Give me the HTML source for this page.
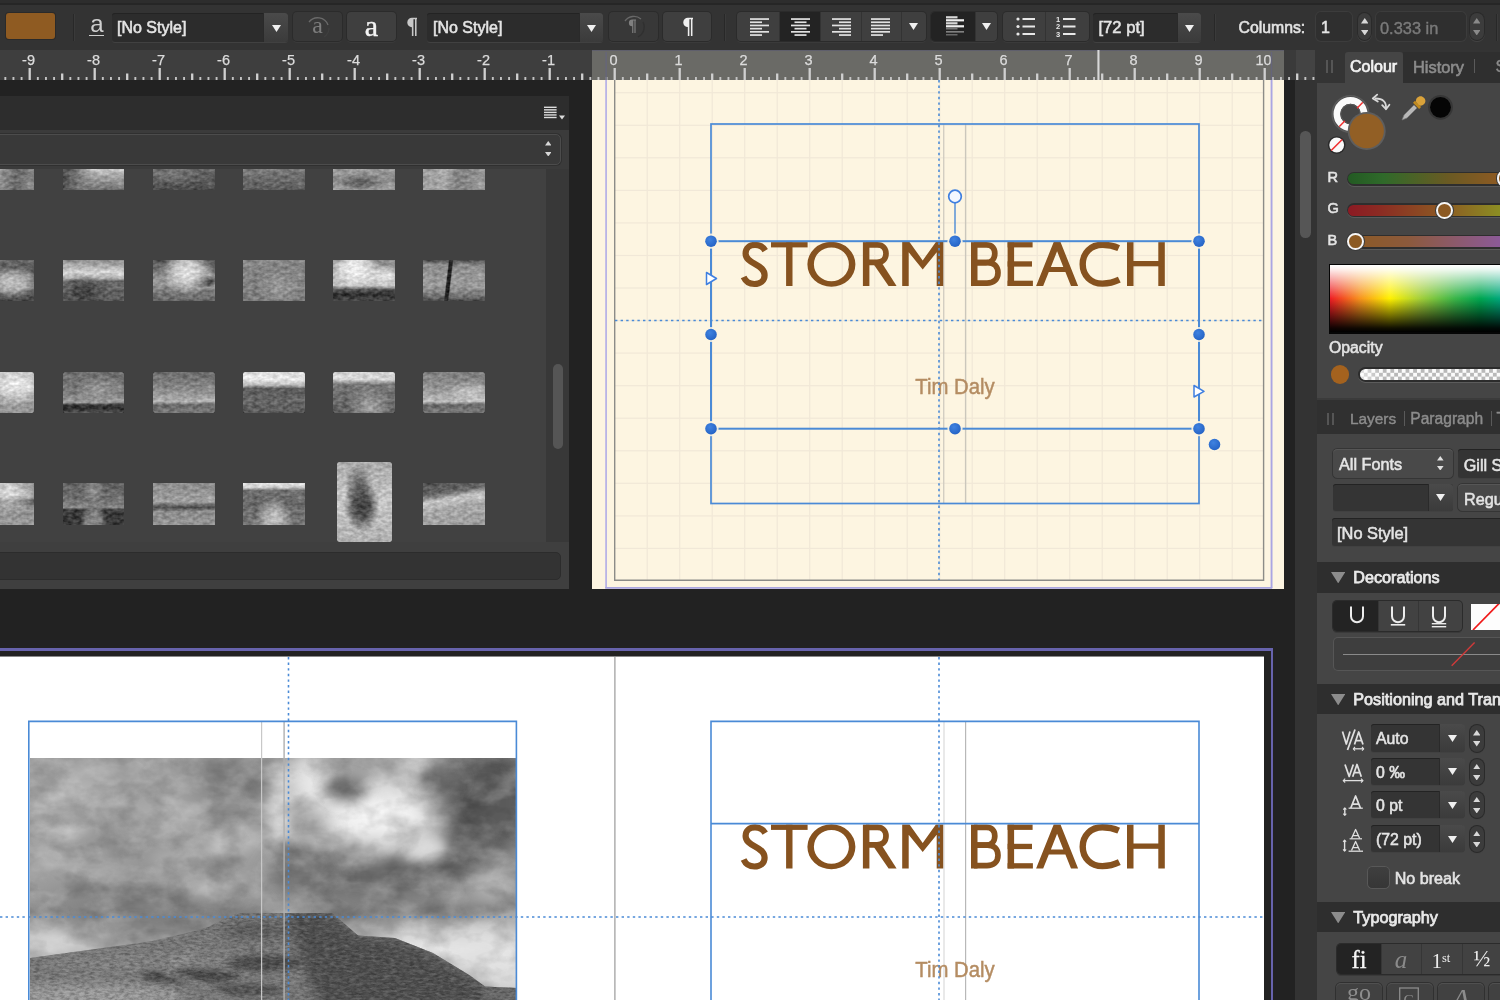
<!DOCTYPE html><html><head><meta charset="utf-8"><title>Publisher</title><style>
*{box-sizing:border-box;margin:0;padding:0}
html,body{width:1500px;height:1000px;overflow:hidden;background:#222;font-family:"Liberation Sans",sans-serif;}
.a{position:absolute}
.t{position:absolute;white-space:nowrap;font-size:16px;line-height:20px;color:#e4e4e4;-webkit-text-stroke:0.55px #e4e4e4}
.dim{color:#8c8c8c;-webkit-text-stroke:0.4px #8c8c8c}
.fld{position:absolute;background:#2c2c2c;border-radius:3px;box-shadow:inset 0 1px 0 #232323,0 1px 0 #414141}
.arr{position:absolute;background:linear-gradient(#4a4a4a,#3b3b3b);border-left:1px solid #2a2a2a;border-radius:0 3px 3px 0}
.btn{position:absolute;background:#3f3f3f;border-radius:4px;box-shadow:0 0 0 1px #2b2b2b,0 2px 0 #3a3a3a}
.grp{position:absolute;border-radius:4px;box-shadow:0 0 0 1px #2b2b2b,0 2px 0 #3a3a3a;background:#3f3f3f;overflow:hidden}
.seg{position:absolute;top:0;bottom:0;border-left:1px solid #333}
.sel{background:#232323}
.step{position:absolute;background:#3c3c3c;border-radius:7px;box-shadow:0 0 0 1px #2a2a2a,0 1px 0 1px #444}
.sep{position:absolute;width:1px;background:#282828;box-shadow:1px 0 0 #3a3a3a}
.hdr{position:absolute;left:1317px;right:0;background:#2e2e2e}
</style></head><body><div id="root" style="position:absolute;left:0;top:0;width:1500px;height:1000px;overflow:hidden;will-change:transform">
<div class="a" style="left:0;top:0;width:1500px;height:50px;background:#333"></div>
<div class="a" style="left:0;top:0;width:1500px;height:3px;background:#2d2d2d"></div>
<div class="a" style="left:0;top:3px;width:1500px;height:2px;background:#262626"></div>
<div class="a" style="left:6px;top:13px;width:49px;height:26px;background:#8f5b22;border-radius:3px;box-shadow:0 0 0 1px #2a2a2a"></div>
<div class="sep" style="left:73px;top:14px;height:27px"></div>
<div class="a" style="left:88px;top:9px;width:18px;height:30px;color:#cfcfcf;font-size:24px;line-height:30px;text-align:center">a</div>
<div class="a" style="left:89px;top:34.5px;width:15px;height:1.5px;background:#cfcfcf"></div>
<div class="fld" style="left:112px;top:13px;width:176px;height:29px"></div><div class="arr" style="left:263px;top:13px;width:25px;height:29px"></div><svg class="a" style="left:271.5px;top:24.5px" width="9" height="7" viewBox="0 0 9 7"><path d="M0 0H9L4.5 7Z" fill="#f0f0f0"/></svg>
<div class="t" style="left:117px;top:18px">[No Style]</div>
<div class="btn" style="left:293px;top:12px;width:49px;height:29px;background:#383838"></div>
<div class="btn" style="left:347px;top:12px;width:49px;height:29px"></div>
<div class="a" style="left:293px;top:10px;width:49px;height:30px;text-align:center;font-family:'Liberation Serif',serif;font-size:24px;line-height:30px;color:#7d7d7d">a</div>
<svg class="a" style="left:304px;top:14px" width="28" height="26" viewBox="0 0 28 26"><path d="M5 8A11 11 0 0 1 24 11" fill="none" stroke="#6a6a6a" stroke-width="1.3"/><path d="M25 14A11 11 0 0 1 20 23" fill="none" stroke="#3f3f3f" stroke-width="1.3"/></svg>
<div class="a" style="left:347px;top:9px;width:49px;height:34px;text-align:center;font-family:'Liberation Serif',serif;font-size:30px;line-height:34px;color:#f4f4f4;-webkit-text-stroke:0.4px #f4f4f4">a</div>
<svg class="a" style="left:405.6px;top:16.6px" width="11.76" height="19.6" viewBox="0 0 12 20"><path d="M6.2 0.8H11.6V2.2H10.8V20H9.2V2.2H7.6V20H6V10.4A4.8 4.8 0 0 1 6.2 0.8Z" fill="#c8c8c8"/></svg>
<div class="fld" style="left:427px;top:13px;width:176px;height:29px"></div><div class="arr" style="left:579px;top:13px;width:24px;height:29px"></div><svg class="a" style="left:587.0px;top:24.5px" width="9" height="7" viewBox="0 0 9 7"><path d="M0 0H9L4.5 7Z" fill="#f0f0f0"/></svg>
<div class="t" style="left:433px;top:18px">[No Style]</div>
<div class="btn" style="left:609px;top:12px;width:49px;height:29px;background:#383838"></div>
<div class="btn" style="left:663px;top:12px;width:48px;height:29px"></div>
<svg class="a" style="left:628px;top:19px" width="8.4" height="14" viewBox="0 0 12 20"><path d="M6.2 0.8H11.6V2.2H10.8V20H9.2V2.2H7.6V20H6V10.4A4.8 4.8 0 0 1 6.2 0.8Z" fill="#808080"/></svg>
<svg class="a" style="left:620px;top:14px" width="28" height="26" viewBox="0 0 28 26"><path d="M5 7A11 11 0 0 1 21 5" fill="none" stroke="#686868" stroke-width="1.3"/><path d="M23 8A11 11 0 0 1 18 23" fill="none" stroke="#303030" stroke-width="1.3"/></svg>
<svg class="a" style="left:681.5px;top:17px" width="11.639999999999999" height="19.4" viewBox="0 0 12 20"><path d="M6.2 0.8H11.6V2.2H10.8V20H9.2V2.2H7.6V20H6V10.4A4.8 4.8 0 0 1 6.2 0.8Z" fill="#f0f0f0"/></svg>
<div class="sep" style="left:724px;top:14px;height:27px"></div>
<div class="grp" style="left:737px;top:12px;width:189px;height:29px"><div class="seg sel" style="left:42px;width:41px"></div><div class="seg" style="left:83px;width:41px"></div><div class="seg" style="left:124px;width:40px"></div><div class="seg" style="left:164px;width:25px"></div></div>
<svg class="a" style="left:750px;top:17.5px" width="19" height="18" viewBox="0 0 19 18"><rect x="0" y="0.2" width="19" height="1.7" fill="#e2e2e2"/><rect x="0" y="3.4000000000000004" width="12" height="1.7" fill="#e2e2e2"/><rect x="0" y="6.6000000000000005" width="19" height="1.7" fill="#e2e2e2"/><rect x="0" y="9.8" width="12" height="1.7" fill="#e2e2e2"/><rect x="0" y="13.0" width="19" height="1.7" fill="#e2e2e2"/><rect x="0" y="16.2" width="12" height="1.7" fill="#e2e2e2"/></svg>
<svg class="a" style="left:790.5px;top:17.5px" width="19" height="18" viewBox="0 0 19 18"><rect x="0" y="0.2" width="19" height="1.7" fill="#e2e2e2"/><rect x="3.5" y="3.4000000000000004" width="12" height="1.7" fill="#e2e2e2"/><rect x="0" y="6.6000000000000005" width="19" height="1.7" fill="#e2e2e2"/><rect x="3.5" y="9.8" width="12" height="1.7" fill="#e2e2e2"/><rect x="0" y="13.0" width="19" height="1.7" fill="#e2e2e2"/><rect x="3.5" y="16.2" width="12" height="1.7" fill="#e2e2e2"/></svg>
<svg class="a" style="left:831.5px;top:17.5px" width="19" height="18" viewBox="0 0 19 18"><rect x="0" y="0.2" width="19" height="1.7" fill="#e2e2e2"/><rect x="7" y="3.4000000000000004" width="12" height="1.7" fill="#e2e2e2"/><rect x="0" y="6.6000000000000005" width="19" height="1.7" fill="#e2e2e2"/><rect x="7" y="9.8" width="12" height="1.7" fill="#e2e2e2"/><rect x="0" y="13.0" width="19" height="1.7" fill="#e2e2e2"/><rect x="7" y="16.2" width="12" height="1.7" fill="#e2e2e2"/></svg>
<svg class="a" style="left:870.5px;top:17.5px" width="19" height="18" viewBox="0 0 19 18"><rect x="0" y="0.2" width="19" height="1.7" fill="#e2e2e2"/><rect x="0" y="3.4000000000000004" width="19" height="1.7" fill="#e2e2e2"/><rect x="0" y="6.6000000000000005" width="19" height="1.7" fill="#e2e2e2"/><rect x="0" y="9.8" width="19" height="1.7" fill="#e2e2e2"/><rect x="0" y="13.0" width="19" height="1.7" fill="#e2e2e2"/><rect x="0" y="16.2" width="12" height="1.7" fill="#e2e2e2"/></svg>
<svg class="a" style="left:909.0px;top:23.0px" width="9" height="7" viewBox="0 0 9 7"><path d="M0 0H9L4.5 7Z" fill="#f0f0f0"/></svg>
<div class="grp" style="left:931px;top:12px;width:66px;height:29px"><div class="seg sel" style="left:0;width:44px;border:0"></div><div class="seg" style="left:44px;width:22px"></div></div>
<svg class="a" style="left:946px;top:16px" width="19" height="21" viewBox="0 0 19 21"><rect x="0" y="0.2" width="11.5" height="2.2" fill="#d8d8d8"/><rect x="0" y="3.2" width="18" height="2.2" fill="#f0f0f0"/><rect x="0" y="6.2" width="11.5" height="2.2" fill="#d8d8d8"/><rect x="0" y="9.2" width="18" height="2.2" fill="#f0f0f0"/><rect x="0" y="12.2" width="11.5" height="1.2" fill="#8a8a8a"/><rect x="0" y="15.2" width="18" height="1.3" fill="#9a9a9a"/><rect x="0" y="18.2" width="11.5" height="1.2" fill="#7a7a7a"/></svg>
<svg class="a" style="left:982.0px;top:23.0px" width="9" height="7" viewBox="0 0 9 7"><path d="M0 0H9L4.5 7Z" fill="#f0f0f0"/></svg>
<div class="grp" style="left:1003px;top:12px;width:86px;height:29px"><div class="seg" style="left:42px;width:44px"></div></div>
<svg class="a" style="left:1016px;top:16px" width="20" height="21" viewBox="0 0 20 21"><circle cx="2" cy="3.0" r="1.6" fill="#e8e8e8"/><rect x="6.5" y="2.0" width="12.5" height="2" fill="#e8e8e8"/><circle cx="2" cy="10.5" r="1.6" fill="#e8e8e8"/><rect x="6.5" y="9.5" width="12.5" height="2" fill="#e8e8e8"/><circle cx="2" cy="18.0" r="1.6" fill="#e8e8e8"/><rect x="6.5" y="17.0" width="12.5" height="2" fill="#e8e8e8"/></svg>
<svg class="a" style="left:1056px;top:15px" width="22" height="23" viewBox="0 0 22 23"><text x="0" y="6.8" font-family="Liberation Sans" font-size="7.5" font-weight="bold" fill="#e8e8e8">1</text><rect x="7" y="3.0" width="12.5" height="2" fill="#e8e8e8"/><text x="0" y="14.3" font-family="Liberation Sans" font-size="7.5" font-weight="bold" fill="#e8e8e8">2</text><rect x="7" y="10.5" width="12.5" height="2" fill="#e8e8e8"/><text x="0" y="21.8" font-family="Liberation Sans" font-size="7.5" font-weight="bold" fill="#e8e8e8">3</text><rect x="7" y="18.0" width="12.5" height="2" fill="#e8e8e8"/></svg>
<div class="fld" style="left:1093px;top:13px;width:108px;height:29px"></div><div class="arr" style="left:1177px;top:13px;width:24px;height:29px"></div><svg class="a" style="left:1185.0px;top:24.5px" width="9" height="7" viewBox="0 0 9 7"><path d="M0 0H9L4.5 7Z" fill="#f0f0f0"/></svg>
<div class="t" style="left:1098.5px;top:18px;font-size:16.6px">[72 pt]</div>
<div class="sep" style="left:1214px;top:14px;height:27px"></div>
<div class="t" style="left:1238.5px;top:17.5px;font-size:15.8px">Columns:</div>
<div class="fld" style="left:1316px;top:12px;width:36px;height:29px;border-radius:5px;background:#2f2f2f;box-shadow:0 0 0 1px #3c3c3c"></div>
<div class="t" style="left:1321px;top:17.5px">1</div>
<div class="step" style="left:1357.5px;top:12.5px;width:13.5px;height:27.5px"></div><svg class="a" style="left:1360.5px;top:18.0px" width="7.5" height="5.5" viewBox="0 0 7.5 5.5"><path d="M0 5.5H7.5L3.75 0Z" fill="#d8d8d8"/></svg><svg class="a" style="left:1360.5px;top:29.549999999999997px" width="7.5" height="5.5" viewBox="0 0 7.5 5.5"><path d="M0 0H7.5L3.75 5.5Z" fill="#d8d8d8"/></svg>
<div class="fld" style="left:1376px;top:12px;width:89.5px;height:29px;border-radius:5px;background:#2f2f2f;box-shadow:0 0 0 1px #3c3c3c"></div>
<div class="t dim" style="left:1380px;top:17.5px;font-size:16.4px;color:#7a7a7a;-webkit-text-stroke-color:#7a7a7a">0.333 in</div>
<div class="step" style="left:1469.5px;top:12.5px;width:14px;height:27.5px"></div><svg class="a" style="left:1472.75px;top:18.0px" width="7.5" height="5.5" viewBox="0 0 7.5 5.5"><path d="M0 5.5H7.5L3.75 0Z" fill="#8a8a8a"/></svg><svg class="a" style="left:1472.75px;top:29.549999999999997px" width="7.5" height="5.5" viewBox="0 0 7.5 5.5"><path d="M0 0H7.5L3.75 5.5Z" fill="#8a8a8a"/></svg>
<div class="sep" style="left:1496px;top:14px;height:27px"></div>
<div class="a" style="left:0;top:50px;width:1315px;height:30px;background:#3e3e3e"></div>
<div class="a" style="left:592px;top:50px;width:692px;height:30px;background:#6a6a66;border-top:1.5px solid #5f5f6c"></div>
<div class="a" style="left:1284px;top:50px;width:12px;height:30px;background:#3a3a3a"></div>
<div class="a" style="left:1296px;top:50px;width:19px;height:30px;background:#434343"></div>
<svg class="a" style="left:0;top:50px" width="1316" height="30" viewBox="0 0 1316 30"><rect x="4.38" y="27" width="1.9" height="3" fill="#c4c4c4"/><rect x="12.50" y="27" width="1.9" height="3" fill="#c4c4c4"/><rect x="20.63" y="27" width="1.9" height="3" fill="#c4c4c4"/><rect x="28.55" y="18" width="2.3" height="12" fill="#d0d0d0"/><rect x="36.88" y="27" width="1.9" height="3" fill="#c4c4c4"/><rect x="45.00" y="27" width="1.9" height="3" fill="#c4c4c4"/><rect x="53.13" y="27" width="1.9" height="3" fill="#c4c4c4"/><rect x="61.05" y="23.5" width="2.3" height="6.5" fill="#d0d0d0"/><rect x="69.38" y="27" width="1.9" height="3" fill="#c4c4c4"/><rect x="77.50" y="27" width="1.9" height="3" fill="#c4c4c4"/><rect x="85.63" y="27" width="1.9" height="3" fill="#c4c4c4"/><rect x="93.55" y="18" width="2.3" height="12" fill="#d0d0d0"/><rect x="101.88" y="27" width="1.9" height="3" fill="#c4c4c4"/><rect x="110.00" y="27" width="1.9" height="3" fill="#c4c4c4"/><rect x="118.13" y="27" width="1.9" height="3" fill="#c4c4c4"/><rect x="126.05" y="23.5" width="2.3" height="6.5" fill="#d0d0d0"/><rect x="134.38" y="27" width="1.9" height="3" fill="#c4c4c4"/><rect x="142.50" y="27" width="1.9" height="3" fill="#c4c4c4"/><rect x="150.63" y="27" width="1.9" height="3" fill="#c4c4c4"/><rect x="158.55" y="18" width="2.3" height="12" fill="#d0d0d0"/><rect x="166.88" y="27" width="1.9" height="3" fill="#c4c4c4"/><rect x="175.00" y="27" width="1.9" height="3" fill="#c4c4c4"/><rect x="183.13" y="27" width="1.9" height="3" fill="#c4c4c4"/><rect x="191.05" y="23.5" width="2.3" height="6.5" fill="#d0d0d0"/><rect x="199.38" y="27" width="1.9" height="3" fill="#c4c4c4"/><rect x="207.50" y="27" width="1.9" height="3" fill="#c4c4c4"/><rect x="215.63" y="27" width="1.9" height="3" fill="#c4c4c4"/><rect x="223.55" y="18" width="2.3" height="12" fill="#d0d0d0"/><rect x="231.88" y="27" width="1.9" height="3" fill="#c4c4c4"/><rect x="240.00" y="27" width="1.9" height="3" fill="#c4c4c4"/><rect x="248.13" y="27" width="1.9" height="3" fill="#c4c4c4"/><rect x="256.05" y="23.5" width="2.3" height="6.5" fill="#d0d0d0"/><rect x="264.38" y="27" width="1.9" height="3" fill="#c4c4c4"/><rect x="272.50" y="27" width="1.9" height="3" fill="#c4c4c4"/><rect x="280.63" y="27" width="1.9" height="3" fill="#c4c4c4"/><rect x="288.55" y="18" width="2.3" height="12" fill="#d0d0d0"/><rect x="296.88" y="27" width="1.9" height="3" fill="#c4c4c4"/><rect x="305.00" y="27" width="1.9" height="3" fill="#c4c4c4"/><rect x="313.13" y="27" width="1.9" height="3" fill="#c4c4c4"/><rect x="321.05" y="23.5" width="2.3" height="6.5" fill="#d0d0d0"/><rect x="329.38" y="27" width="1.9" height="3" fill="#c4c4c4"/><rect x="337.50" y="27" width="1.9" height="3" fill="#c4c4c4"/><rect x="345.63" y="27" width="1.9" height="3" fill="#c4c4c4"/><rect x="353.55" y="18" width="2.3" height="12" fill="#d0d0d0"/><rect x="361.88" y="27" width="1.9" height="3" fill="#c4c4c4"/><rect x="370.00" y="27" width="1.9" height="3" fill="#c4c4c4"/><rect x="378.13" y="27" width="1.9" height="3" fill="#c4c4c4"/><rect x="386.05" y="23.5" width="2.3" height="6.5" fill="#d0d0d0"/><rect x="394.38" y="27" width="1.9" height="3" fill="#c4c4c4"/><rect x="402.50" y="27" width="1.9" height="3" fill="#c4c4c4"/><rect x="410.63" y="27" width="1.9" height="3" fill="#c4c4c4"/><rect x="418.55" y="18" width="2.3" height="12" fill="#d0d0d0"/><rect x="426.88" y="27" width="1.9" height="3" fill="#c4c4c4"/><rect x="435.00" y="27" width="1.9" height="3" fill="#c4c4c4"/><rect x="443.13" y="27" width="1.9" height="3" fill="#c4c4c4"/><rect x="451.05" y="23.5" width="2.3" height="6.5" fill="#d0d0d0"/><rect x="459.38" y="27" width="1.9" height="3" fill="#c4c4c4"/><rect x="467.50" y="27" width="1.9" height="3" fill="#c4c4c4"/><rect x="475.63" y="27" width="1.9" height="3" fill="#c4c4c4"/><rect x="483.55" y="18" width="2.3" height="12" fill="#d0d0d0"/><rect x="491.88" y="27" width="1.9" height="3" fill="#c4c4c4"/><rect x="500.00" y="27" width="1.9" height="3" fill="#c4c4c4"/><rect x="508.13" y="27" width="1.9" height="3" fill="#c4c4c4"/><rect x="516.05" y="23.5" width="2.3" height="6.5" fill="#d0d0d0"/><rect x="524.38" y="27" width="1.9" height="3" fill="#c4c4c4"/><rect x="532.50" y="27" width="1.9" height="3" fill="#c4c4c4"/><rect x="540.62" y="27" width="1.9" height="3" fill="#c4c4c4"/><rect x="548.55" y="18" width="2.3" height="12" fill="#d0d0d0"/><rect x="556.88" y="27" width="1.9" height="3" fill="#c4c4c4"/><rect x="565.00" y="27" width="1.9" height="3" fill="#c4c4c4"/><rect x="573.12" y="27" width="1.9" height="3" fill="#c4c4c4"/><rect x="581.05" y="23.5" width="2.3" height="6.5" fill="#d0d0d0"/><rect x="589.38" y="27" width="1.9" height="3" fill="#c4c4c4"/><rect x="597.50" y="27" width="1.9" height="3" fill="#c4c4c4"/><rect x="605.62" y="27" width="1.9" height="3" fill="#c4c4c4"/><rect x="613.55" y="18" width="2.3" height="12" fill="#d0d0d0"/><rect x="621.88" y="27" width="1.9" height="3" fill="#c4c4c4"/><rect x="630.00" y="27" width="1.9" height="3" fill="#c4c4c4"/><rect x="638.12" y="27" width="1.9" height="3" fill="#c4c4c4"/><rect x="646.05" y="23.5" width="2.3" height="6.5" fill="#d0d0d0"/><rect x="654.38" y="27" width="1.9" height="3" fill="#c4c4c4"/><rect x="662.50" y="27" width="1.9" height="3" fill="#c4c4c4"/><rect x="670.62" y="27" width="1.9" height="3" fill="#c4c4c4"/><rect x="678.55" y="18" width="2.3" height="12" fill="#d0d0d0"/><rect x="686.88" y="27" width="1.9" height="3" fill="#c4c4c4"/><rect x="695.00" y="27" width="1.9" height="3" fill="#c4c4c4"/><rect x="703.12" y="27" width="1.9" height="3" fill="#c4c4c4"/><rect x="711.05" y="23.5" width="2.3" height="6.5" fill="#d0d0d0"/><rect x="719.38" y="27" width="1.9" height="3" fill="#c4c4c4"/><rect x="727.50" y="27" width="1.9" height="3" fill="#c4c4c4"/><rect x="735.62" y="27" width="1.9" height="3" fill="#c4c4c4"/><rect x="743.55" y="18" width="2.3" height="12" fill="#d0d0d0"/><rect x="751.88" y="27" width="1.9" height="3" fill="#c4c4c4"/><rect x="760.00" y="27" width="1.9" height="3" fill="#c4c4c4"/><rect x="768.12" y="27" width="1.9" height="3" fill="#c4c4c4"/><rect x="776.05" y="23.5" width="2.3" height="6.5" fill="#d0d0d0"/><rect x="784.38" y="27" width="1.9" height="3" fill="#c4c4c4"/><rect x="792.50" y="27" width="1.9" height="3" fill="#c4c4c4"/><rect x="800.62" y="27" width="1.9" height="3" fill="#c4c4c4"/><rect x="808.55" y="18" width="2.3" height="12" fill="#d0d0d0"/><rect x="816.88" y="27" width="1.9" height="3" fill="#c4c4c4"/><rect x="825.00" y="27" width="1.9" height="3" fill="#c4c4c4"/><rect x="833.12" y="27" width="1.9" height="3" fill="#c4c4c4"/><rect x="841.05" y="23.5" width="2.3" height="6.5" fill="#d0d0d0"/><rect x="849.38" y="27" width="1.9" height="3" fill="#c4c4c4"/><rect x="857.50" y="27" width="1.9" height="3" fill="#c4c4c4"/><rect x="865.62" y="27" width="1.9" height="3" fill="#c4c4c4"/><rect x="873.55" y="18" width="2.3" height="12" fill="#d0d0d0"/><rect x="881.88" y="27" width="1.9" height="3" fill="#c4c4c4"/><rect x="890.00" y="27" width="1.9" height="3" fill="#c4c4c4"/><rect x="898.12" y="27" width="1.9" height="3" fill="#c4c4c4"/><rect x="906.05" y="23.5" width="2.3" height="6.5" fill="#d0d0d0"/><rect x="914.38" y="27" width="1.9" height="3" fill="#c4c4c4"/><rect x="922.50" y="27" width="1.9" height="3" fill="#c4c4c4"/><rect x="930.62" y="27" width="1.9" height="3" fill="#c4c4c4"/><rect x="938.55" y="18" width="2.3" height="12" fill="#d0d0d0"/><rect x="946.88" y="27" width="1.9" height="3" fill="#c4c4c4"/><rect x="955.00" y="27" width="1.9" height="3" fill="#c4c4c4"/><rect x="963.12" y="27" width="1.9" height="3" fill="#c4c4c4"/><rect x="971.05" y="23.5" width="2.3" height="6.5" fill="#d0d0d0"/><rect x="979.38" y="27" width="1.9" height="3" fill="#c4c4c4"/><rect x="987.50" y="27" width="1.9" height="3" fill="#c4c4c4"/><rect x="995.62" y="27" width="1.9" height="3" fill="#c4c4c4"/><rect x="1003.55" y="18" width="2.3" height="12" fill="#d0d0d0"/><rect x="1011.88" y="27" width="1.9" height="3" fill="#c4c4c4"/><rect x="1020.00" y="27" width="1.9" height="3" fill="#c4c4c4"/><rect x="1028.12" y="27" width="1.9" height="3" fill="#c4c4c4"/><rect x="1036.05" y="23.5" width="2.3" height="6.5" fill="#d0d0d0"/><rect x="1044.38" y="27" width="1.9" height="3" fill="#c4c4c4"/><rect x="1052.50" y="27" width="1.9" height="3" fill="#c4c4c4"/><rect x="1060.62" y="27" width="1.9" height="3" fill="#c4c4c4"/><rect x="1068.55" y="18" width="2.3" height="12" fill="#d0d0d0"/><rect x="1076.88" y="27" width="1.9" height="3" fill="#c4c4c4"/><rect x="1085.00" y="27" width="1.9" height="3" fill="#c4c4c4"/><rect x="1093.12" y="27" width="1.9" height="3" fill="#c4c4c4"/><rect x="1101.05" y="23.5" width="2.3" height="6.5" fill="#d0d0d0"/><rect x="1109.38" y="27" width="1.9" height="3" fill="#c4c4c4"/><rect x="1117.50" y="27" width="1.9" height="3" fill="#c4c4c4"/><rect x="1125.62" y="27" width="1.9" height="3" fill="#c4c4c4"/><rect x="1133.55" y="18" width="2.3" height="12" fill="#d0d0d0"/><rect x="1141.88" y="27" width="1.9" height="3" fill="#c4c4c4"/><rect x="1150.00" y="27" width="1.9" height="3" fill="#c4c4c4"/><rect x="1158.12" y="27" width="1.9" height="3" fill="#c4c4c4"/><rect x="1166.05" y="23.5" width="2.3" height="6.5" fill="#d0d0d0"/><rect x="1174.38" y="27" width="1.9" height="3" fill="#c4c4c4"/><rect x="1182.50" y="27" width="1.9" height="3" fill="#c4c4c4"/><rect x="1190.62" y="27" width="1.9" height="3" fill="#c4c4c4"/><rect x="1198.55" y="18" width="2.3" height="12" fill="#d0d0d0"/><rect x="1206.88" y="27" width="1.9" height="3" fill="#c4c4c4"/><rect x="1215.00" y="27" width="1.9" height="3" fill="#c4c4c4"/><rect x="1223.12" y="27" width="1.9" height="3" fill="#c4c4c4"/><rect x="1231.05" y="23.5" width="2.3" height="6.5" fill="#d0d0d0"/><rect x="1239.38" y="27" width="1.9" height="3" fill="#c4c4c4"/><rect x="1247.50" y="27" width="1.9" height="3" fill="#c4c4c4"/><rect x="1255.62" y="27" width="1.9" height="3" fill="#c4c4c4"/><rect x="1263.55" y="18" width="2.3" height="12" fill="#d0d0d0"/><rect x="1271.88" y="27" width="1.9" height="3" fill="#c4c4c4"/><rect x="1280.00" y="27" width="1.9" height="3" fill="#c4c4c4"/><rect x="1288.12" y="27" width="1.9" height="3" fill="#c4c4c4"/><rect x="1296.05" y="23.5" width="2.3" height="6.5" fill="#d0d0d0"/><rect x="1304.38" y="27" width="1.9" height="3" fill="#c4c4c4"/><rect x="1312.50" y="27" width="1.9" height="3" fill="#c4c4c4"/><text x="28.5" y="15.2" text-anchor="middle" font-family="Liberation Sans" font-size="14.5" fill="#dcdcdc" stroke="#dcdcdc" stroke-width="0.25">-9</text><text x="93.5" y="15.2" text-anchor="middle" font-family="Liberation Sans" font-size="14.5" fill="#dcdcdc" stroke="#dcdcdc" stroke-width="0.25">-8</text><text x="158.5" y="15.2" text-anchor="middle" font-family="Liberation Sans" font-size="14.5" fill="#dcdcdc" stroke="#dcdcdc" stroke-width="0.25">-7</text><text x="223.5" y="15.2" text-anchor="middle" font-family="Liberation Sans" font-size="14.5" fill="#dcdcdc" stroke="#dcdcdc" stroke-width="0.25">-6</text><text x="288.5" y="15.2" text-anchor="middle" font-family="Liberation Sans" font-size="14.5" fill="#dcdcdc" stroke="#dcdcdc" stroke-width="0.25">-5</text><text x="353.5" y="15.2" text-anchor="middle" font-family="Liberation Sans" font-size="14.5" fill="#dcdcdc" stroke="#dcdcdc" stroke-width="0.25">-4</text><text x="418.5" y="15.2" text-anchor="middle" font-family="Liberation Sans" font-size="14.5" fill="#dcdcdc" stroke="#dcdcdc" stroke-width="0.25">-3</text><text x="483.5" y="15.2" text-anchor="middle" font-family="Liberation Sans" font-size="14.5" fill="#dcdcdc" stroke="#dcdcdc" stroke-width="0.25">-2</text><text x="548.5" y="15.2" text-anchor="middle" font-family="Liberation Sans" font-size="14.5" fill="#dcdcdc" stroke="#dcdcdc" stroke-width="0.25">-1</text><text x="613.5" y="15.2" text-anchor="middle" font-family="Liberation Sans" font-size="14.5" fill="#dcdcdc" stroke="#dcdcdc" stroke-width="0.25">0</text><text x="678.5" y="15.2" text-anchor="middle" font-family="Liberation Sans" font-size="14.5" fill="#dcdcdc" stroke="#dcdcdc" stroke-width="0.25">1</text><text x="743.5" y="15.2" text-anchor="middle" font-family="Liberation Sans" font-size="14.5" fill="#dcdcdc" stroke="#dcdcdc" stroke-width="0.25">2</text><text x="808.5" y="15.2" text-anchor="middle" font-family="Liberation Sans" font-size="14.5" fill="#dcdcdc" stroke="#dcdcdc" stroke-width="0.25">3</text><text x="873.5" y="15.2" text-anchor="middle" font-family="Liberation Sans" font-size="14.5" fill="#dcdcdc" stroke="#dcdcdc" stroke-width="0.25">4</text><text x="938.5" y="15.2" text-anchor="middle" font-family="Liberation Sans" font-size="14.5" fill="#dcdcdc" stroke="#dcdcdc" stroke-width="0.25">5</text><text x="1003.5" y="15.2" text-anchor="middle" font-family="Liberation Sans" font-size="14.5" fill="#dcdcdc" stroke="#dcdcdc" stroke-width="0.25">6</text><text x="1068.5" y="15.2" text-anchor="middle" font-family="Liberation Sans" font-size="14.5" fill="#dcdcdc" stroke="#dcdcdc" stroke-width="0.25">7</text><text x="1133.5" y="15.2" text-anchor="middle" font-family="Liberation Sans" font-size="14.5" fill="#dcdcdc" stroke="#dcdcdc" stroke-width="0.25">8</text><text x="1198.5" y="15.2" text-anchor="middle" font-family="Liberation Sans" font-size="14.5" fill="#dcdcdc" stroke="#dcdcdc" stroke-width="0.25">9</text><text x="1263.5" y="15.2" text-anchor="middle" font-family="Liberation Sans" font-size="14.5" fill="#dcdcdc" stroke="#dcdcdc" stroke-width="0.25">10</text><rect x="1097.4" y="0" width="2.1" height="30" fill="#d8d8d8"/><rect x="1270.8" y="2" width="1.4" height="28" fill="#65657a"/><rect x="605.4" y="2" width="1.4" height="28" fill="#65657a"/></svg>
<div class="a" style="left:0;top:96px;width:569px;height:493px;background:#404040"></div>
<div class="a" style="left:0;top:96px;width:569px;height:34px;background:#2d2d2d"></div>
<div class="a" style="left:0;top:130px;width:569px;height:39px;background:#3b3b3b"></div>
<svg class="a" style="left:544px;top:106px" width="22" height="15" viewBox="0 0 22 15"><rect x="0" y="0.6" width="12.6" height="1.4" fill="#dcdcdc"/><rect x="0" y="3.15" width="12.6" height="1.4" fill="#dcdcdc"/><rect x="0" y="5.699999999999999" width="12.6" height="1.4" fill="#dcdcdc"/><rect x="0" y="8.25" width="12.6" height="1.4" fill="#dcdcdc"/><rect x="0" y="10.799999999999999" width="12.6" height="1.4" fill="#dcdcdc"/><path d="M15 9.5H21L18 13.6Z" fill="#dcdcdc"/></svg>
<div class="a" style="left:-10px;top:134px;width:570.5px;height:31px;background:#393939;border:1px solid #4c4c4c;border-radius:5px;box-shadow:0 0 0 1px #303030"></div>
<svg class="a" style="left:544.75px;top:141.25px" width="6.5" height="4.5" viewBox="0 0 6.5 4.5"><path d="M0 4.5H6.5L3.25 0Z" fill="#d8d8d8"/></svg><svg class="a" style="left:544.75px;top:151.75px" width="6.5" height="4.5" viewBox="0 0 6.5 4.5"><path d="M0 0H6.5L3.25 4.5Z" fill="#d8d8d8"/></svg>
<div class="a" style="left:0;top:169px;width:546px;height:373px;background:#414141"></div>
<div class="a" style="left:546px;top:169px;width:23px;height:373px;background:#383838"></div>
<div class="a" style="left:553px;top:364px;width:10px;height:85px;background:#555;border-radius:5px"></div>
<div class="a" style="left:0;top:542px;width:569px;height:47px;background:#3f3f3f"></div>
<div class="a" style="left:-10px;top:552px;width:570.5px;height:28px;background:#333;border:1px solid #2c2c2c;border-radius:5px"></div>
<svg width="0" height="0" style="position:absolute"><defs><filter id="tn" x="0" y="0" width="100%" height="100%" color-interpolation-filters="sRGB"><feTurbulence type="fractalNoise" baseFrequency="0.2 0.3" numOctaves="2" seed="11" result="n"/><feColorMatrix in="n" type="matrix" values="1 0 0 0 0  1 0 0 0 0  1 0 0 0 0  0 0 0 0 1" result="g"/><feComposite in="g" in2="SourceGraphic" operator="in" result="gc"/><feComposite in="SourceGraphic" in2="gc" operator="arithmetic" k1="0" k2="1" k3="0.32" k4="-0.16"/></filter></defs></svg>
<div class="a" style="left:-27.6px;top:169px;width:61.8px;height:20.5px;background:linear-gradient(100deg,#777 0%,#9a9a9a 40%,#6a6a6a 70%,#8a8a8a 100%);filter:url(#tn);"></div>
<div class="a" style="left:62.6px;top:169px;width:61.8px;height:20.5px;background:linear-gradient(90deg,#4a4a4a 0%,#7a7a7a 25%,rgba(0,0,0,0) 50%),linear-gradient(180deg,#c8c8c8 0%,#9c9c9c 45%,#707070 100%);filter:url(#tn);"></div>
<div class="a" style="left:153px;top:169px;width:61.8px;height:20.5px;background:radial-gradient(ellipse at 30% 30%,#777 0%,rgba(0,0,0,0) 50%),linear-gradient(180deg,#686868,#4c4c4c);filter:url(#tn);"></div>
<div class="a" style="left:243px;top:169px;width:61.8px;height:20.5px;background:linear-gradient(180deg,#7a7a7a 0%,#6a6a6a 50%,#5c5c5c 100%);filter:url(#tn);"></div>
<div class="a" style="left:333px;top:169px;width:61.8px;height:20.5px;background:radial-gradient(ellipse at 45% 65%,#555 0%,rgba(0,0,0,0) 45%),linear-gradient(180deg,#9a9a9a 0%,#888 60%,#a0a0a0 100%);filter:url(#tn);"></div>
<div class="a" style="left:423.4px;top:169px;width:61.8px;height:20.5px;background:linear-gradient(100deg,#999 0%,#aaa 35%,#808080 55%,#9a9a9a 100%);filter:url(#tn);"></div>
<div class="a" style="left:-27.6px;top:260px;width:61.8px;height:41px;background:radial-gradient(ellipse at 65% 55%,#c8c8c8 0%,#aaa 25%,rgba(0,0,0,0) 50%),linear-gradient(180deg,#666,#4a4a4a);filter:url(#tn);"></div>
<div class="a" style="left:62.6px;top:260px;width:61.8px;height:41px;background:radial-gradient(ellipse at 35% 80%,#3c3c3c 0%,rgba(0,0,0,0) 40%),linear-gradient(180deg,#8a8a8a 0%,#d4d4d4 30%,#b0b0b0 44%,#6a6a6a 52%,#5a5a5a 100%);filter:url(#tn);"></div>
<div class="a" style="left:153px;top:260px;width:61.8px;height:41px;background:radial-gradient(ellipse at 55% 30%,#e4e4e4 0%,#c8c8c8 25%,rgba(0,0,0,0) 55%),radial-gradient(ellipse at 80% 52%,#444 0%,#444 12%,rgba(0,0,0,0) 22%),linear-gradient(180deg,#505050 0%,#8a8a8a 40%,#9a9a9a 55%,#7c7c7c 75%,#666 100%);filter:url(#tn);"></div>
<div class="a" style="left:243px;top:260px;width:61.8px;height:41px;background:radial-gradient(ellipse at 60% 65%,#9c9c9c 0%,rgba(0,0,0,0) 45%),linear-gradient(180deg,#868686,#7c7c7c);filter:url(#tn);"></div>
<div class="a" style="left:333px;top:260px;width:61.8px;height:41px;background:radial-gradient(ellipse at 35% 25%,#f2f2f2 0%,#ddd 22%,rgba(0,0,0,0) 45%),radial-gradient(ellipse at 80% 40%,#e8e8e8 0%,rgba(0,0,0,0) 35%),linear-gradient(180deg,#8a8a8a 0%,#a8a8a8 40%,#c0c0c0 62%,#555 72%,#2e2e2e 85%,#4a4a4a 100%);filter:url(#tn);"></div>
<div class="a" style="left:423.4px;top:260px;width:61.8px;height:41px;background:linear-gradient(97deg,rgba(0,0,0,0) 38%,#222 40%,#222 44%,rgba(0,0,0,0) 46%),linear-gradient(180deg,#4a4a4a 0%,#8c8c8c 12%,#9c9c9c 60%,#7a7a7a 85%,#4a4a4a 100%);filter:url(#tn);"></div>
<div class="a" style="left:-27.6px;top:371.5px;width:61.8px;height:41.5px;background:radial-gradient(ellipse at 70% 30%,#eee 0%,#ccc 30%,rgba(0,0,0,0) 60%),linear-gradient(180deg,#8a8a8a 0%,#aaa 45%,#555 58%,#8a8a8a 70%,#9a9a9a 100%);filter:url(#tn);border-radius:2px;"></div>
<div class="a" style="left:62.6px;top:371.5px;width:61.8px;height:41.5px;background:radial-gradient(ellipse at 60% 45%,#9a9a9a 0%,rgba(0,0,0,0) 50%),linear-gradient(180deg,#6c6c6c 0%,#7a7a7a 50%,#9a9a9a 74%,#3a3a3a 80%,#2c2c2c 90%,#5a5a5a 100%);filter:url(#tn);border-radius:2px;"></div>
<div class="a" style="left:153px;top:371.5px;width:61.8px;height:41.5px;background:linear-gradient(180deg,#6a6a6a 0%,#888 40%,#b0b0b0 72%,#6a6a6a 80%,#777 100%);filter:url(#tn);border-radius:2px;"></div>
<div class="a" style="left:243px;top:371.5px;width:61.8px;height:41.5px;background:linear-gradient(180deg,#d8d8d8 0%,#eaeaea 18%,#b8b8b8 32%,#5c5c5c 40%,#666 70%,#5a5a5a 100%);filter:url(#tn);border-radius:2px;"></div>
<div class="a" style="left:333px;top:371.5px;width:61.8px;height:41.5px;background:radial-gradient(ellipse at 60% 85%,#a4a4a4 0%,rgba(0,0,0,0) 45%),linear-gradient(180deg,#cfcfcf 0%,#d8d8d8 18%,#777 30%,#6c6c6c 60%,#606060 100%);filter:url(#tn);border-radius:2px;"></div>
<div class="a" style="left:423.4px;top:371.5px;width:61.8px;height:41.5px;background:radial-gradient(ellipse at 75% 50%,#ccc 0%,rgba(0,0,0,0) 35%),linear-gradient(180deg,#7c7c7c 0%,#999 45%,#bcbcbc 72%,#6a6a6a 80%,#777 100%);filter:url(#tn);border-radius:2px;"></div>
<div class="a" style="left:-27.6px;top:483px;width:61.8px;height:41.5px;background:radial-gradient(ellipse at 60% 20%,#e0e0e0 0%,rgba(0,0,0,0) 50%),linear-gradient(180deg,#888 0%,#aaa 30%,#555 42%,#8c8c8c 55%,#9a9a9a 100%);filter:url(#tn);"></div>
<div class="a" style="left:62.6px;top:483px;width:61.8px;height:41.5px;background:radial-gradient(ellipse 22% 60% at 50% 100%,#8c8c8c 0%,#7a7a7a 60%,rgba(0,0,0,0) 100%),radial-gradient(ellipse at 50% 18%,#9a9a9a 0%,rgba(0,0,0,0) 25%),linear-gradient(180deg,#606060 0%,#707070 40%,#8a8a8a 58%,#3a3a3a 64%,#383838 100%);filter:url(#tn);"></div>
<div class="a" style="left:153px;top:483px;width:61.8px;height:41.5px;background:linear-gradient(180deg,#8a8a8a 0%,#a0a0a0 45%,#4c4c4c 58%,#8c8c8c 68%,#949494 100%);filter:url(#tn);"></div>
<div class="a" style="left:243px;top:483px;width:61.8px;height:41.5px;background:radial-gradient(ellipse at 50% 85%,#c4c4c4 0%,#aaa 20%,rgba(0,0,0,0) 42%),linear-gradient(180deg,#e0e0e0 0%,#d0d0d0 10%,#707070 18%,#686868 50%,#777 100%);filter:url(#tn);"></div>
<div class="a" style="left:423.4px;top:483px;width:61.8px;height:41.5px;background:linear-gradient(170deg,#4c4c4c 0%,#666 25%,#c8c8c8 40%,#aaa 55%,#9a9a9a 100%);filter:url(#tn);"></div>
<div class="a" style="left:337px;top:462px;width:54.5px;height:79.5px;background:radial-gradient(ellipse at 45% 55%,#3c3c3c 0%,#555 20%,rgba(0,0,0,0) 42%),radial-gradient(ellipse at 40% 30%,#555 0%,rgba(0,0,0,0) 30%),linear-gradient(180deg,#aaa,#c8c8c8 50%,#b0b0b0);filter:url(#tn);border-radius:2px;"></div>
<div class="a" style="left:592px;top:80px;width:692.4px;height:509.3px;background:#fdf5e1;overflow:hidden" id="up">
<svg class="a" style="left:0;top:0" width="693" height="510" viewBox="592 80 693 510"><rect x="646.6" y="80" width="1.2" height="500" fill="#f1e8d8"/><rect x="679.1" y="80" width="1.2" height="500" fill="#f1e8d8"/><rect x="711.6" y="80" width="1.2" height="500" fill="#f1e8d8"/><rect x="744.1" y="80" width="1.2" height="500" fill="#f1e8d8"/><rect x="776.6" y="80" width="1.2" height="500" fill="#f1e8d8"/><rect x="809.1" y="80" width="1.2" height="500" fill="#f1e8d8"/><rect x="841.6" y="80" width="1.2" height="500" fill="#f1e8d8"/><rect x="874.1" y="80" width="1.2" height="500" fill="#f1e8d8"/><rect x="906.6" y="80" width="1.2" height="500" fill="#f1e8d8"/><rect x="939.1" y="80" width="1.2" height="500" fill="#f1e8d8"/><rect x="971.6" y="80" width="1.2" height="500" fill="#f1e8d8"/><rect x="1004.1" y="80" width="1.2" height="500" fill="#f1e8d8"/><rect x="1036.6" y="80" width="1.2" height="500" fill="#f1e8d8"/><rect x="1069.1" y="80" width="1.2" height="500" fill="#f1e8d8"/><rect x="1101.6" y="80" width="1.2" height="500" fill="#f1e8d8"/><rect x="1134.1" y="80" width="1.2" height="500" fill="#f1e8d8"/><rect x="1166.6" y="80" width="1.2" height="500" fill="#f1e8d8"/><rect x="1199.1" y="80" width="1.2" height="500" fill="#f1e8d8"/><rect x="1231.6" y="80" width="1.2" height="500" fill="#f1e8d8"/><rect x="615" y="92.1" width="648" height="1.2" fill="#f1e8d8"/><rect x="615" y="124.7" width="648" height="1.2" fill="#f1e8d8"/><rect x="615" y="157.2" width="648" height="1.2" fill="#f1e8d8"/><rect x="615" y="189.8" width="648" height="1.2" fill="#f1e8d8"/><rect x="615" y="222.3" width="648" height="1.2" fill="#f1e8d8"/><rect x="615" y="254.9" width="648" height="1.2" fill="#f1e8d8"/><rect x="615" y="287.4" width="648" height="1.2" fill="#f1e8d8"/><rect x="615" y="320.0" width="648" height="1.2" fill="#f1e8d8"/><rect x="615" y="352.5" width="648" height="1.2" fill="#f1e8d8"/><rect x="615" y="385.1" width="648" height="1.2" fill="#f1e8d8"/><rect x="615" y="417.6" width="648" height="1.2" fill="#f1e8d8"/><rect x="615" y="450.2" width="648" height="1.2" fill="#f1e8d8"/><rect x="615" y="482.7" width="648" height="1.2" fill="#f1e8d8"/><rect x="615" y="515.3" width="648" height="1.2" fill="#f1e8d8"/><rect x="615" y="547.8" width="648" height="1.2" fill="#f1e8d8"/><rect x="605.2" y="80" width="1.8" height="508" fill="#b9b4e6"/><rect x="1270.6" y="80" width="1.9" height="508" fill="#aaa5e3"/><rect x="605.2" y="587" width="667" height="1.8" fill="#aaa6e0"/><path d="M614.7 80V580.3H1263.6V80" fill="none" stroke="#8c8c88" stroke-width="1.4"/></svg></div>
<div class="a" style="left:0;top:657px;width:1264px;height:343px;background:#fff"></div>
<div class="a" style="left:0;top:655.5px;width:1264px;height:1.5px;background:#8a8a8a"></div>
<div class="a" style="left:0;top:648.4px;width:1272.6px;height:2.3px;background:#6763ad"></div>
<div class="a" style="left:1270.6px;top:648.3px;width:2px;height:352px;background:#6763ad"></div>
<svg class="a" style="left:29.5px;top:757.5px" width="487" height="243" viewBox="0 0 487 243">
<defs>
<filter id="b20" x="-30%" y="-30%" width="160%" height="160%"><feGaussianBlur stdDeviation="13"/></filter>
<filter id="b10" x="-30%" y="-30%" width="160%" height="160%"><feGaussianBlur stdDeviation="6"/></filter>
<filter id="b3" x="-30%" y="-30%" width="160%" height="160%"><feGaussianBlur stdDeviation="2.5"/></filter>
<filter id="nz" x="0" y="0" width="100%" height="100%"><feTurbulence type="fractalNoise" baseFrequency="0.03 0.045" numOctaves="4" seed="7"/><feColorMatrix values="0 0 0 0 1  0 0 0 0 1  0 0 0 0 1  1.8 0 0 0 -0.72"/></filter>
<filter id="nz2" x="0" y="0" width="100%" height="100%"><feTurbulence type="fractalNoise" baseFrequency="0.028 0.04" numOctaves="4" seed="23"/><feColorMatrix values="0 0 0 0 0  0 0 0 0 0  0 0 0 0 0  1.7 0 0 0 -0.7"/></filter>
<filter id="gn" x="0" y="0" width="100%" height="100%"><feTurbulence type="fractalNoise" baseFrequency="0.2 0.45" numOctaves="3" seed="3"/><feColorMatrix values="0 0 0 0 0  0 0 0 0 0  0 0 0 0 0  1.4 0 0 0 -0.5"/></filter>
<filter id="gn2" x="0" y="0" width="100%" height="100%"><feTurbulence type="fractalNoise" baseFrequency="0.15 0.4" numOctaves="3" seed="31"/><feColorMatrix values="0 0 0 0 1  0 0 0 0 1  0 0 0 0 1  1.4 0 0 0 -0.55"/></filter>
<clipPath id="hill"><path d="M0 200 L120 183.5 L165 173 L178 169 L207 155 L302 155 L328 177.5 L365 180 L403 195 L440 217.5 L455 228.5 L487 230 V243 H0Z"/></clipPath>
<clipPath id="sky"><rect width="487" height="243"/></clipPath>
</defs>
<g clip-path="url(#sky)">
<rect width="487" height="243" fill="#9c9c9c"/>
<g filter="url(#b20)">
<ellipse cx="40" cy="35" rx="40" ry="16" fill="#bcbcbc"/>
<ellipse cx="120" cy="62" rx="50" ry="14" fill="#b4b4b4"/>
<ellipse cx="150" cy="15" rx="35" ry="12" fill="#adadad"/>
<ellipse cx="55" cy="105" rx="45" ry="12" fill="#acacac"/>
<ellipse cx="200" cy="25" rx="45" ry="18" fill="#828282"/>
<ellipse cx="90" cy="82" rx="55" ry="10" fill="#8a8a8a"/>
<ellipse cx="110" cy="130" rx="90" ry="14" fill="#878787"/>
<ellipse cx="110" cy="160" rx="140" ry="13" fill="#747474"/>
<ellipse cx="350" cy="62" rx="55" ry="34" fill="#f4f4f4"/>
<ellipse cx="282" cy="25" rx="28" ry="24" fill="#efefef"/>
<ellipse cx="388" cy="14" rx="24" ry="16" fill="#e6e6e6"/>
<ellipse cx="455" cy="42" rx="52" ry="55" fill="#5a5a5a"/>
<ellipse cx="335" cy="118" rx="95" ry="30" fill="#707070"/>
<ellipse cx="432" cy="95" rx="42" ry="24" fill="#666"/>
<ellipse cx="435" cy="192" rx="95" ry="26" fill="#e4e4e4"/>
<ellipse cx="485" cy="215" rx="45" ry="25" fill="#dedede"/>
<ellipse cx="20" cy="184" rx="50" ry="11" fill="#ececec"/>
</g>
<g filter="url(#b10)">
<ellipse cx="316" cy="30" rx="22" ry="13" fill="#7c7c7c"/>
<ellipse cx="250" cy="50" rx="12" ry="38" fill="#cfcfcf"/>
<ellipse cx="205" cy="82" rx="24" ry="14" fill="#b6b6b6"/>
<ellipse cx="180" cy="130" rx="30" ry="9" fill="#b0b0b0"/>
<ellipse cx="270" cy="110" rx="28" ry="22" fill="#7a7a7a"/>
<ellipse cx="466" cy="126" rx="24" ry="16" fill="#adadad"/>
<ellipse cx="385" cy="152" rx="95" ry="7" fill="#777"/>
<ellipse cx="395" cy="90" rx="22" ry="14" fill="#d8d8d8"/>
<ellipse cx="410" cy="22" rx="24" ry="12" fill="#6c6c6c"/>
<ellipse cx="30" cy="70" rx="30" ry="8" fill="#c4c4c4"/>
<ellipse cx="150" cy="100" rx="30" ry="8" fill="#aaa"/>
</g>
<rect width="487" height="243" filter="url(#nz)" opacity="0.3"/>
<rect width="487" height="243" filter="url(#nz2)" opacity="0.25"/>
</g>
<g clip-path="url(#hill)">
<rect width="487" height="243" fill="#7a7a7a"/>
<g filter="url(#b10)">
<path d="M255 150 L302 155 L328 177.5 L365 180 L403 195 L440 217.5 L455 228.5 L487 230 V250 H290 L270 200Z" fill="#505050"/>
<ellipse cx="60" cy="238" rx="95" ry="12" fill="#a0a0a0"/>
<ellipse cx="120" cy="205" rx="110" ry="10" fill="#848484"/>
<ellipse cx="230" cy="172" rx="40" ry="8" fill="#5c5c5c"/>
</g>
<g filter="url(#b3)">
<ellipse cx="160" cy="218" rx="50" ry="7" fill="#4a4a4a"/>
<ellipse cx="235" cy="205" rx="38" ry="8" fill="#4e4e4e"/>
<ellipse cx="215" cy="232" rx="40" ry="6" fill="#555"/>
<path d="M165 190 Q150 205 135 215 Q170 222 200 243" fill="none" stroke="#a8a8a8" stroke-width="2"/>
<rect x="452" y="230" width="40" height="14" fill="#6a6a6a"/>
</g>
<rect width="487" height="243" filter="url(#gn)" opacity="0.4"/>
<rect width="487" height="243" filter="url(#gn2)" opacity="0.25"/>
</g>
</svg>
<svg class="a" style="left:0;top:0" width="1500" height="1000" viewBox="0 0 1500 1000"><defs><radialGradient id="hg" cx="0.4" cy="0.35" r="0.7"><stop offset="0" stop-color="#3f82e0"/><stop offset="1" stop-color="#2462c4"/></radialGradient><clipPath id="cpU"><rect x="592" y="80" width="692.4" height="509"/></clipPath></defs><g clip-path="url(#cpU)"><rect x="943" y="124" width="1.4" height="380" fill="#d3cec2"/><rect x="964.9" y="124" width="1.4" height="380" fill="#cbc7bc"/><g transform="translate(0 0)" fill="#86521f" stroke="none"><path d="M765.2 250.6C763 246.8 759.4 244.9 755 244.9C749.4 244.9 745.6 248.4 745.6 253.4C745.6 258.4 749.6 261 755 263.9C760.6 266.9 764.6 269.6 764.6 275.2C764.6 280.6 760.4 284 754.4 284C749.4 284 745.6 281.4 743.6 277" fill="none" stroke="#86521f" stroke-width="6.2"/><rect x="771" y="242.1" width="36.6" height="5.3"/><rect x="786.1" y="242.1" width="6.4" height="43.9"/><path fill-rule="evenodd" d="M807.4 264.3a24 22.5 0 1 0 48 0a24 22.5 0 1 0 -48 0ZM813.9 264.3a17.5 16.9 0 1 1 35 0a17.5 16.9 0 1 1 -35 0Z"/><rect x="862.9" y="242.1" width="6.5" height="43.9"/><path d="M866 244.9H877.4C883 244.9 886 248.6 886 253.6C886 258.8 882.6 262.4 877 262.4H866" fill="none" stroke="#86521f" stroke-width="5.7"/><path d="M873.8 264.6L881.4 262.2L896.6 286H888.6Z"/><path d="M902.2 286V242.1H909.5L922.7 260.6L935.9 242.1H943.2V286H936.7V252.2L922.7 269.6L908.7 252.2V286Z"/><rect x="971" y="242.1" width="6.5" height="43.9"/><path d="M974 244.9H986.4C992 244.9 994.8 248.4 994.8 253.4C994.8 258.6 991.6 262.6 986 262.6H974" fill="none" stroke="#86521f" stroke-width="5.7"/><path d="M974 262.6H987.4C994 262.6 998 266.6 998 272.8C998 279.4 993.6 283.2 987 283.2H974" fill="none" stroke="#86521f" stroke-width="5.7"/><rect x="1007.6" y="242.1" width="6.5" height="43.9"/><rect x="1007.6" y="242.1" width="25" height="5.3"/><rect x="1007.6" y="261.3" width="24.4" height="5.3"/><rect x="1007.6" y="280.7" width="25.3" height="5.3"/><path fill-rule="evenodd" d="M1036.1 286L1053.7 242.1H1060.5L1078.1 286H1071L1065.4 272.1H1048.8L1043.2 286ZM1050.9 266.9H1063.3L1057.1 251.2Z"/><path d="M1118.7 248.2C1113.6 245.9 1108 244.8 1102.4 244.8C1091 244.8 1082.7 253 1082.7 264.3C1082.7 275.6 1091 283.6 1102.4 283.6C1108.6 283.6 1114.2 282.2 1119.3 279.7" fill="none" stroke="#86521f" stroke-width="6.4"/><rect x="1127" y="242.1" width="6.5" height="43.9"/><rect x="1158.3" y="242.1" width="6.5" height="43.9"/><rect x="1127" y="261" width="37" height="5.3"/></g><text x="955" y="394" text-anchor="middle" font-family="Liberation Sans" font-size="21.6" fill="#b48c62" stroke="#b48c62" stroke-width="0.45" textLength="79.5" lengthAdjust="spacingAndGlyphs">Tim Daly</text><line x1="939" y1="80" x2="939" y2="580" stroke="#4a8ad6" stroke-width="1.6" stroke-dasharray="2.4 3.2"/><line x1="615" y1="320.5" x2="1263" y2="320.5" stroke="#4a8ad6" stroke-width="1.6" stroke-dasharray="2.4 3.2"/><rect x="711" y="124" width="488" height="379.5" fill="none" stroke="#4a8ad6" stroke-width="1.7"/><rect x="711" y="241.2" width="488" height="187.5" fill="none" stroke="#4a8ad6" stroke-width="2"/><line x1="955" y1="203" x2="955" y2="236" stroke="#4a8ad6" stroke-width="1.4"/><circle cx="955" cy="196.5" r="6.3" fill="#f4f8ff" stroke="#3f7fe0" stroke-width="1.7"/><circle cx="711" cy="241.2" r="7.6" fill="#fdf5e1" opacity="0.9"/><circle cx="711" cy="241.2" r="5.8" fill="url(#hg)"/><circle cx="955" cy="241.2" r="7.6" fill="#fdf5e1" opacity="0.9"/><circle cx="955" cy="241.2" r="5.8" fill="url(#hg)"/><circle cx="1199" cy="241.2" r="7.6" fill="#fdf5e1" opacity="0.9"/><circle cx="1199" cy="241.2" r="5.8" fill="url(#hg)"/><circle cx="711" cy="334.5" r="7.6" fill="#fdf5e1" opacity="0.9"/><circle cx="711" cy="334.5" r="5.8" fill="url(#hg)"/><circle cx="1199" cy="334.5" r="7.6" fill="#fdf5e1" opacity="0.9"/><circle cx="1199" cy="334.5" r="5.8" fill="url(#hg)"/><circle cx="711" cy="428.7" r="7.6" fill="#fdf5e1" opacity="0.9"/><circle cx="711" cy="428.7" r="5.8" fill="url(#hg)"/><circle cx="955" cy="428.7" r="7.6" fill="#fdf5e1" opacity="0.9"/><circle cx="955" cy="428.7" r="5.8" fill="url(#hg)"/><circle cx="1199" cy="428.7" r="7.6" fill="#fdf5e1" opacity="0.9"/><circle cx="1199" cy="428.7" r="5.8" fill="url(#hg)"/><circle cx="1214.5" cy="444.5" r="7.6" fill="#fdf5e1" opacity="0.9"/><circle cx="1214.5" cy="444.5" r="5.8" fill="url(#hg)"/><path d="M706.5 272.5L716.5 278.5L706.5 284.5Z" fill="#fff" stroke="#3f7fe0" stroke-width="1.5" stroke-linejoin="round"/><path d="M1194 385.5L1204 391.3L1194 397Z" fill="#fff" stroke="#3f7fe0" stroke-width="1.5" stroke-linejoin="round"/></g><rect x="614.3" y="657" width="1.2" height="343" fill="#9a9a9a"/><rect x="943.5" y="722" width="1" height="278" fill="#d4d4d4"/><rect x="965" y="722" width="1.2" height="278" fill="#b8b8b8"/><rect x="261" y="722" width="1.2" height="278" fill="#c8c8c8"/><rect x="283.4" y="722" width="1.4" height="278" fill="#b0b0b0"/><line x1="288.5" y1="657" x2="288.5" y2="1000" stroke="#4a8ad6" stroke-width="1.6" stroke-dasharray="2.4 3.2"/><line x1="0" y1="917" x2="1264" y2="917" stroke="#4a8ad6" stroke-width="1.6" stroke-dasharray="2.4 3.2"/><g transform="translate(0 582.5)" fill="#86521f" stroke="none"><path d="M765.2 250.6C763 246.8 759.4 244.9 755 244.9C749.4 244.9 745.6 248.4 745.6 253.4C745.6 258.4 749.6 261 755 263.9C760.6 266.9 764.6 269.6 764.6 275.2C764.6 280.6 760.4 284 754.4 284C749.4 284 745.6 281.4 743.6 277" fill="none" stroke="#86521f" stroke-width="6.2"/><rect x="771" y="242.1" width="36.6" height="5.3"/><rect x="786.1" y="242.1" width="6.4" height="43.9"/><path fill-rule="evenodd" d="M807.4 264.3a24 22.5 0 1 0 48 0a24 22.5 0 1 0 -48 0ZM813.9 264.3a17.5 16.9 0 1 1 35 0a17.5 16.9 0 1 1 -35 0Z"/><rect x="862.9" y="242.1" width="6.5" height="43.9"/><path d="M866 244.9H877.4C883 244.9 886 248.6 886 253.6C886 258.8 882.6 262.4 877 262.4H866" fill="none" stroke="#86521f" stroke-width="5.7"/><path d="M873.8 264.6L881.4 262.2L896.6 286H888.6Z"/><path d="M902.2 286V242.1H909.5L922.7 260.6L935.9 242.1H943.2V286H936.7V252.2L922.7 269.6L908.7 252.2V286Z"/><rect x="971" y="242.1" width="6.5" height="43.9"/><path d="M974 244.9H986.4C992 244.9 994.8 248.4 994.8 253.4C994.8 258.6 991.6 262.6 986 262.6H974" fill="none" stroke="#86521f" stroke-width="5.7"/><path d="M974 262.6H987.4C994 262.6 998 266.6 998 272.8C998 279.4 993.6 283.2 987 283.2H974" fill="none" stroke="#86521f" stroke-width="5.7"/><rect x="1007.6" y="242.1" width="6.5" height="43.9"/><rect x="1007.6" y="242.1" width="25" height="5.3"/><rect x="1007.6" y="261.3" width="24.4" height="5.3"/><rect x="1007.6" y="280.7" width="25.3" height="5.3"/><path fill-rule="evenodd" d="M1036.1 286L1053.7 242.1H1060.5L1078.1 286H1071L1065.4 272.1H1048.8L1043.2 286ZM1050.9 266.9H1063.3L1057.1 251.2Z"/><path d="M1118.7 248.2C1113.6 245.9 1108 244.8 1102.4 244.8C1091 244.8 1082.7 253 1082.7 264.3C1082.7 275.6 1091 283.6 1102.4 283.6C1108.6 283.6 1114.2 282.2 1119.3 279.7" fill="none" stroke="#86521f" stroke-width="6.4"/><rect x="1127" y="242.1" width="6.5" height="43.9"/><rect x="1158.3" y="242.1" width="6.5" height="43.9"/><rect x="1127" y="261" width="37" height="5.3"/></g><text x="955" y="977" text-anchor="middle" font-family="Liberation Sans" font-size="21.6" fill="#b48c62" stroke="#b48c62" stroke-width="0.45" textLength="79.5" lengthAdjust="spacingAndGlyphs">Tim Daly</text><line x1="939" y1="657" x2="939" y2="1000" stroke="#4a8ad6" stroke-width="1.6" stroke-dasharray="2.4 3.2"/><path d="M711 1001V721.4H1199V1001" fill="none" stroke="#4a8ad6" stroke-width="1.6"/><line x1="711" y1="823.6" x2="1199" y2="823.6" stroke="#4a8ad6" stroke-width="1.6"/><path d="M28.8 1001V721.4H516.4V1001" fill="none" stroke="#4a8ad6" stroke-width="1.6"/></svg>
<div class="a" style="left:1295px;top:80px;width:22px;height:920px;background:#333"></div>
<div class="a" style="left:1300.3px;top:131px;width:10.4px;height:107px;background:#565656;border-radius:5.2px"></div>
<div class="a" style="left:1317px;top:50px;width:183px;height:950px;background:#454545"></div>
<div class="a" style="left:1315px;top:50px;width:185px;height:32.5px;background:#343434"></div>
<div class="a" style="left:1345px;top:52px;width:57.5px;height:31px;background:#454545;border-radius:3px 3px 0 0"></div>
<div class="a" style="left:1402.5px;top:52px;width:98px;height:30.5px;background:#2f2f2f"></div>
<div class="a" style="left:1326.4px;top:60px;width:2.1px;height:12.5px;background:#555"></div><div class="a" style="left:1331.4px;top:60px;width:2.1px;height:12.5px;background:#555"></div>
<div class="t" style="left:1350px;top:56.5px;color:#f2f2f2;-webkit-text-stroke:0.7px #f2f2f2">Colour</div>
<div class="t dim" style="left:1413px;top:56.5px;font-size:16.4px;-webkit-text-stroke-width:0.6px">History</div>
<div class="a" style="left:1474px;top:59px;width:1.4px;height:14px;background:#5a5a5a"></div>
<div class="t dim" style="left:1495.5px;top:56.5px">S</div>
<svg class="a" style="left:1317px;top:83px" width="183" height="100" viewBox="1317 83 183 100"><defs><clipPath id="ringc"><circle cx="1350.5" cy="114" r="17"/></clipPath></defs><circle cx="1350.5" cy="114" r="18.3" fill="none" stroke="#5a5a5a" stroke-width="1.6"/><circle cx="1350.5" cy="114" r="13.6" fill="none" stroke="#fafafa" stroke-width="6.8"/><circle cx="1350.5" cy="114" r="9.6" fill="none" stroke="#555" stroke-width="1.4"/><g clip-path="url(#ringc)"><line x1="1336" y1="130" x2="1366" y2="99" stroke="#f03030" stroke-width="1.5"/></g><circle cx="1350.5" cy="114" r="8.9" fill="#454545"/><circle cx="1366.7" cy="131" r="19" fill="#5e5e5e"/><circle cx="1366.7" cy="131" r="17.2" fill="#925f25"/><circle cx="1336.7" cy="145" r="8.8" fill="#2a2a2a"/><circle cx="1336.7" cy="145" r="7.4" fill="#fafafa"/><line x1="1331.2" y1="150.5" x2="1342.2" y2="139.5" stroke="#f03030" stroke-width="1.6"/><g fill="none" stroke="#d8d8d8" stroke-width="1.8" stroke-linecap="round" stroke-linejoin="round"><path d="M1375.5 98.5C1383 98.5 1386.5 102 1386 108.5"/><path d="M1372.8 98.5L1377.2 94.6M1372.8 98.5L1377.8 101.5"/><path d="M1386 109.2L1382.2 105.2M1386 109.2L1389.4 104.8"/></g><g transform="translate(1401.5 95.5)"><path d="M0.5 24.5L2.5 19.5L12.5 9.5L15.5 12.5L5.5 22.5Z" fill="#b8b8b8" stroke="#777" stroke-width="0.7"/><path d="M11.5 7.2L17.6 13.4L19.6 11.4L13.5 5.2Z" fill="#c08a20"/><path d="M14.5 6.2C14 2.5 17.5 -0.2 21 1.2C24.3 2.6 24.8 6.4 22.6 8.6C20.6 10.6 18.4 10.6 17.2 9.4Z" fill="#d9a23a"/></g><circle cx="1440.5" cy="107.3" r="12.4" fill="#363636"/><circle cx="1440.5" cy="107.3" r="10.4" fill="#050505"/></svg>
<div class="t" style="left:1327.5px;top:166.9px;font-size:14.6px">R</div><div class="a" style="left:1346.5px;top:171.5px;width:170px;height:14.4px;border-radius:7.2px;background:#2e2e2e;box-shadow:0 1px 0 #5a5a5a"></div><div class="a" style="left:1348px;top:173.1px;width:170px;height:11.2px;border-radius:5.6px;background:linear-gradient(90deg,#235a23 0px,#2f6a2a 35px,#6a5a23 100px,#8c5a23 150px)"></div><div class="a" style="left:1496.6px;top:170.29999999999998px;width:16.8px;height:16.8px;border-radius:50%;background:#8c5a23;border:2.7px solid #f6f6f6;box-shadow:0 0 0 1px #3a3a3a"></div>
<div class="t" style="left:1327.5px;top:198.4px;font-size:14.6px">G</div><div class="a" style="left:1346.5px;top:203px;width:170px;height:14.4px;border-radius:7.2px;background:#2e2e2e;box-shadow:0 1px 0 #5a5a5a"></div><div class="a" style="left:1348px;top:204.6px;width:170px;height:11.2px;border-radius:5.6px;background:linear-gradient(90deg,#8c1a23 0px,#8c2a23 30px,#8c5a23 96px,#8c8c23 150px,#8c9a23 170px)"></div><div class="a" style="left:1435.8px;top:201.79999999999998px;width:16.8px;height:16.8px;border-radius:50%;background:#8c5a23;border:2.7px solid #f6f6f6;box-shadow:0 0 0 1px #3a3a3a"></div>
<div class="t" style="left:1327.5px;top:229.9px;font-size:14.6px">B</div><div class="a" style="left:1346.5px;top:234.5px;width:170px;height:14.4px;border-radius:7.2px;background:#2e2e2e;box-shadow:0 1px 0 #5a5a5a"></div><div class="a" style="left:1348px;top:236.1px;width:170px;height:11.2px;border-radius:5.6px;background:linear-gradient(90deg,#8c5a23 0px,#8c5a3c 60px,#8c5a78 120px,#8c5aa0 160px)"></div><div class="a" style="left:1347.3px;top:233.29999999999998px;width:16.8px;height:16.8px;border-radius:50%;background:#8c5a23;border:2.7px solid #f6f6f6;box-shadow:0 0 0 1px #3a3a3a"></div>
<div class="a" style="left:1328.5px;top:263.5px;width:180px;height:70px;background:#050505"></div>
<div class="a" style="left:1330px;top:265px;width:180px;height:67px;background:linear-gradient(180deg,#fff 0%,rgba(255,255,255,0.93) 6%,rgba(255,255,255,0) 50%,rgba(0,0,0,0) 50%,rgba(0,0,0,0.93) 94%,#000 100%),linear-gradient(90deg,#ee1c24 0px,#f7931d 30px,#fff100 60px,#a4cf39 90px,#3ab549 125px,#00a650 150px,#00a99d 185px)"></div>
<div class="t" style="left:1329px;top:338px;font-size:15.8px">Opacity</div>
<div class="a" style="left:1330.7px;top:365.2px;width:18.6px;height:18.6px;border-radius:50%;background:#a4621e"></div>
<div class="a" style="left:1358px;top:367px;width:160px;height:14.6px;border-radius:7.3px;background:#2c2c2c;box-shadow:0 1px 0 #5c5c5c"></div>
<div class="a" style="left:1359.6px;top:368.6px;width:160px;height:11.4px;border-radius:5.7px;background:linear-gradient(90deg,rgba(255,255,255,.55),rgba(255,255,255,0) 24px),repeating-conic-gradient(#fbfbfb 0% 25%,#b9b9b9 0% 50%) 0 0/7.6px 7.6px"></div>
<div class="hdr" style="top:399px;height:35px;background:#303030"></div>
<div class="a" style="left:1317px;top:398px;width:183px;height:1.5px;background:#3b3b3b"></div>
<div class="a" style="left:1327px;top:412.5px;width:2px;height:12px;background:#555"></div><div class="a" style="left:1332px;top:412.5px;width:2px;height:12px;background:#555"></div>
<div class="t dim" style="left:1350px;top:408.5px;font-size:15.4px">Layers</div>
<div class="a" style="left:1403.6px;top:411px;width:1.3px;height:15px;background:#5a5a5a"></div>
<div class="t dim" style="left:1410.3px;top:408.5px;font-size:15.6px">Paragraph</div>
<div class="a" style="left:1490.5px;top:411px;width:1.3px;height:15px;background:#5a5a5a"></div>
<div class="t dim" style="left:1496.5px;top:408.5px;font-size:15.6px">T</div>
<div class="a" style="left:1332.5px;top:449px;width:120.7px;height:28.5px;border-radius:4.5px;background:#494949;box-shadow:0 0 0 1px #353535,inset 0 1px 0 #565656"></div>
<div class="t" style="left:1339px;top:454px;font-size:16.2px">All Fonts</div>
<svg class="a" style="left:1437.2px;top:456.0px" width="6.6" height="4.6" viewBox="0 0 6.6 4.6"><path d="M0 4.6H6.6L3.3 0Z" fill="#e0e0e0"/></svg><svg class="a" style="left:1437.2px;top:465.7px" width="6.6" height="4.6" viewBox="0 0 6.6 4.6"><path d="M0 0H6.6L3.3 4.6Z" fill="#e0e0e0"/></svg>
<div class="fld" style="left:1457.7px;top:449px;width:60px;height:28.5px;background:#343434"></div>
<div class="t" style="left:1463.7px;top:454.5px;font-size:16.2px">Gill Sans</div>
<div class="fld" style="left:1332.5px;top:483.5px;width:120.7px;height:27.7px;background:#343434"></div>
<div class="arr" style="left:1427.7px;top:483.5px;width:25.5px;height:27.7px"></div><svg class="a" style="left:1436.2px;top:494.3px" width="9" height="7" viewBox="0 0 9 7"><path d="M0 0H9L4.5 7Z" fill="#f0f0f0"/></svg>
<div class="a" style="left:1457.7px;top:483.5px;width:60px;height:27.7px;border-radius:4.5px;background:#484848;box-shadow:0 0 0 1px #353535,inset 0 1px 0 #565656"></div>
<div class="t" style="left:1464px;top:488.5px;font-size:16.2px">Regular</div>
<div class="fld" style="left:1331.7px;top:518px;width:190px;height:27.7px;background:#343434"></div>
<div class="t" style="left:1337px;top:523px;font-size:16.4px">[No Style]</div>
<div class="hdr" style="top:561.5px;height:31.5px"></div><svg class="a" style="left:1331px;top:571.65px" width="14.4" height="11.4" viewBox="0 0 14.4 11.4"><path d="M0 0H14.4L7.2 11.4Z" fill="#8c8c8c"/></svg><div class="t" style="left:1353.3px;top:567.05px;font-size:16.2px;-webkit-text-stroke:0.75px #e8e8e8;color:#e8e8e8">Decorations</div>
<div class="grp" style="left:1333.2px;top:600.5px;width:129px;height:30px;background:#424242"><div class="seg sel" style="left:0;width:45px;border:0"></div><div class="seg" style="left:45px;width:40px;border-color:#363636"></div><div class="seg" style="left:85px;width:44px;border-color:#363636"></div></div>
<svg class="a" style="left:1348.3px;top:605px" width="18" height="24" viewBox="0 0 18 24"><path d="M3 1.5V11.2A6 6 0 0 0 15 11.2V1.5" fill="none" stroke="#ececec" stroke-width="2"/></svg><svg class="a" style="left:1388.7px;top:605px" width="18" height="24" viewBox="0 0 18 24"><path d="M3 1.5V11.2A6 6 0 0 0 15 11.2V1.5" fill="none" stroke="#ececec" stroke-width="2"/><rect x="1.8" y="19" width="14.4" height="1.6" fill="#ececec"/></svg><svg class="a" style="left:1429.6px;top:605px" width="18" height="24" viewBox="0 0 18 24"><path d="M3 1.5V11.2A6 6 0 0 0 15 11.2V1.5" fill="none" stroke="#ececec" stroke-width="2"/><rect x="1.8" y="18" width="14.4" height="1.4" fill="#ececec"/><rect x="1.8" y="21" width="14.4" height="1.4" fill="#ececec"/></svg>
<svg class="a" style="left:1471.2px;top:604.2px" width="29" height="26" viewBox="0 0 29 26"><rect width="29" height="26" fill="#fdfdfd"/><line x1="2" y1="26" x2="30" y2="-2.5" stroke="#f01818" stroke-width="1.7"/></svg>
<div class="a" style="left:1334px;top:638px;width:180px;height:32.2px;border-radius:4px;background:#3e3e3e;box-shadow:0 0 0 1px #565656"></div>
<div class="a" style="left:1343px;top:653.8px;width:160px;height:1.4px;background:#8a8a8a"></div>
<svg class="a" style="left:1448px;top:640px" width="30" height="28" viewBox="1448 640 30 28"><line x1="1451.7" y1="665.7" x2="1474.6" y2="642.5" stroke="#d03a3a" stroke-width="1.4"/></svg>
<div class="hdr" style="top:683.7px;height:30.799999999999955px"></div><svg class="a" style="left:1331px;top:693.5px" width="14.4" height="11.4" viewBox="0 0 14.4 11.4"><path d="M0 0H14.4L7.2 11.4Z" fill="#8c8c8c"/></svg><div class="t" style="left:1353.3px;top:688.9px;font-size:16.2px;-webkit-text-stroke:0.75px #e8e8e8;color:#e8e8e8">Positioning and Transform</div>
<div class="fld" style="left:1370.7px;top:724.2px;width:93.8px;height:27.799999999999955px;background:#343434"></div>
<div class="arr" style="left:1439px;top:724.2px;width:25.5px;height:27.799999999999955px"></div><svg class="a" style="left:1447.8px;top:735.1px" width="9" height="7" viewBox="0 0 9 7"><path d="M0 0H9L4.5 7Z" fill="#f0f0f0"/></svg>
<div class="t" style="left:1376px;top:729.2px;font-size:15.8px">Auto</div>
<div class="step" style="left:1469.5px;top:725.0px;width:14px;height:26.599999999999955px"></div><svg class="a" style="left:1472.75px;top:730.23px" width="7.5" height="5.5" viewBox="0 0 7.5 5.5"><path d="M0 5.5H7.5L3.75 0Z" fill="#d8d8d8"/></svg><svg class="a" style="left:1472.75px;top:741.4019999999999px" width="7.5" height="5.5" viewBox="0 0 7.5 5.5"><path d="M0 0H7.5L3.75 5.5Z" fill="#d8d8d8"/></svg>
<div class="fld" style="left:1370.7px;top:757.8px;width:93.8px;height:27.200000000000045px;background:#343434"></div>
<div class="arr" style="left:1439px;top:757.8px;width:25.5px;height:27.200000000000045px"></div><svg class="a" style="left:1447.8px;top:768.4px" width="9" height="7" viewBox="0 0 9 7"><path d="M0 0H9L4.5 7Z" fill="#f0f0f0"/></svg>
<div class="t" style="left:1376px;top:762.5px;font-size:15.8px">0 ‰</div>
<div class="step" style="left:1469.5px;top:758.5999999999999px;width:14px;height:26.000000000000046px"></div><svg class="a" style="left:1472.75px;top:763.65px" width="7.5" height="5.5" viewBox="0 0 7.5 5.5"><path d="M0 5.5H7.5L3.75 0Z" fill="#d8d8d8"/></svg><svg class="a" style="left:1472.75px;top:774.5699999999999px" width="7.5" height="5.5" viewBox="0 0 7.5 5.5"><path d="M0 0H7.5L3.75 5.5Z" fill="#d8d8d8"/></svg>
<div class="fld" style="left:1370.7px;top:791px;width:93.8px;height:27.200000000000045px;background:#343434"></div>
<div class="arr" style="left:1439px;top:791px;width:25.5px;height:27.200000000000045px"></div><svg class="a" style="left:1447.8px;top:801.6px" width="9" height="7" viewBox="0 0 9 7"><path d="M0 0H9L4.5 7Z" fill="#f0f0f0"/></svg>
<div class="t" style="left:1376px;top:795.7px;font-size:15.8px">0 pt</div>
<div class="step" style="left:1469.5px;top:791.8px;width:14px;height:26.000000000000046px"></div><svg class="a" style="left:1472.75px;top:796.85px" width="7.5" height="5.5" viewBox="0 0 7.5 5.5"><path d="M0 5.5H7.5L3.75 0Z" fill="#d8d8d8"/></svg><svg class="a" style="left:1472.75px;top:807.77px" width="7.5" height="5.5" viewBox="0 0 7.5 5.5"><path d="M0 0H7.5L3.75 5.5Z" fill="#d8d8d8"/></svg>
<div class="fld" style="left:1370.7px;top:824.7px;width:93.8px;height:27.59999999999991px;background:#343434"></div>
<div class="arr" style="left:1439px;top:824.7px;width:25.5px;height:27.59999999999991px"></div><svg class="a" style="left:1447.8px;top:835.5px" width="9" height="7" viewBox="0 0 9 7"><path d="M0 0H9L4.5 7Z" fill="#f0f0f0"/></svg>
<div class="t" style="left:1376px;top:829.6px;font-size:15.8px">(72 pt)</div>
<div class="step" style="left:1469.5px;top:825.5px;width:14px;height:26.39999999999991px"></div><svg class="a" style="left:1472.75px;top:830.67px" width="7.5" height="5.5" viewBox="0 0 7.5 5.5"><path d="M0 5.5H7.5L3.75 0Z" fill="#d8d8d8"/></svg><svg class="a" style="left:1472.75px;top:841.7579999999999px" width="7.5" height="5.5" viewBox="0 0 7.5 5.5"><path d="M0 0H7.5L3.75 5.5Z" fill="#d8d8d8"/></svg>
<svg class="a" style="left:1340px;top:720px" width="28" height="140" viewBox="1340 720 28 140" fill="none" stroke="#e0e0e0" stroke-width="1.75" stroke-linejoin="round"><path d="M1342.5 731.5L1346.3 744L1350 731.5"/><path d="M1347.5 750L1355 729.5"/><path d="M1354.5 744.5L1358.7 732L1363 744.5M1356 740.5H1361.5"/><path d="M1353.5 748.8H1363.5" stroke-width="1.3"/><path d="M1355 747L1353.3 748.8L1355 750.6M1362 747L1363.7 748.8L1362 750.6" stroke-width="1.1"/><path d="M1345 764.5L1349.2 776.5L1353.3 764.5"/><path d="M1352.7 776.8L1357 764.5L1361.3 776.8M1354.2 772.7H1359.8"/><path d="M1343.5 780.6H1362.8" stroke-width="1.3"/><path d="M1345.2 778.7L1343.2 780.6L1345.2 782.5M1361 778.7L1363 780.6L1361 782.5" stroke-width="1.1"/><path d="M1350.8 808L1355.6 796L1360.4 808M1352.5 804H1358.7"/><path d="M1348.6 808.2H1362.8" stroke-width="1.3"/><path d="M1344.8 808V815" stroke-width="1.4"/><path d="M1343.3 809.6L1344.8 807.8L1346.3 809.6M1343.3 813.6L1344.8 815.4L1346.3 813.6" stroke-width="1.1"/><path d="M1351.5 838.5L1355.6 829.5L1359.7 838.5M1353 835.6H1358.2" stroke-width="1.3"/><path d="M1349.6 838.8H1362" stroke-width="1.2"/><path d="M1351.5 850.5L1355.6 841.5L1359.7 850.5M1353 847.6H1358.2" stroke-width="1.3"/><path d="M1348.6 851.2H1363" stroke-width="1.3"/><path d="M1344.6 840V851" stroke-width="1.4"/><path d="M1343.1 841.8L1344.6 840L1346.1 841.8M1343.1 849.4L1344.6 851.2L1346.1 849.4" stroke-width="1.1"/></svg>
<div class="a" style="left:1367.7px;top:866.5px;width:21.8px;height:21px;border-radius:4.5px;background:linear-gradient(#3f3f3f,#363636);box-shadow:0 0 0 1px #585858"></div>
<div class="t" style="left:1394.7px;top:868.3px;font-size:16.1px">No break</div>
<div class="hdr" style="top:901.7px;height:30.799999999999955px"></div><svg class="a" style="left:1331px;top:911.5px" width="14.4" height="11.4" viewBox="0 0 14.4 11.4"><path d="M0 0H14.4L7.2 11.4Z" fill="#8c8c8c"/></svg><div class="t" style="left:1353.3px;top:906.9px;font-size:16.2px;-webkit-text-stroke:0.75px #e8e8e8;color:#e8e8e8">Typography</div>
<div class="grp" style="left:1337px;top:943.7px;width:180px;height:30px;background:#424242"><div class="seg sel" style="left:0;width:44.2px;border:0"></div><div class="seg" style="left:44.2px;width:40px;border-color:#363636"></div><div class="seg" style="left:84px;width:40.5px;border-color:#363636"></div><div class="seg" style="left:124.5px;width:56px;border-color:#363636"></div></div>
<div class="a" style="left:1337px;top:945px;width:44px;height:30px;text-align:center;font-family:'Liberation Serif',serif;font-size:24.5px;line-height:30px;color:#f6f6f6;-webkit-text-stroke:0.3px #f6f6f6">fi</div>
<div class="a" style="left:1381px;top:944.5px;width:40px;height:30px;text-align:center;font-family:'Liberation Serif',serif;font-style:italic;font-size:25px;line-height:30px;color:#8a8a8a">a</div>
<div class="a" style="left:1421px;top:942.5px;width:40px;height:30px;text-align:center;font-family:'Liberation Serif',serif;font-size:20.5px;line-height:30px;color:#ececec">1<span style="font-size:12.5px;vertical-align:5.5px">st</span></div>
<div class="a" style="left:1462px;top:944px;width:40px;height:30px;text-align:center;font-family:'Liberation Serif',serif;font-size:22.5px;line-height:30px;color:#ececec">½</div>
<div class="a" style="left:1336.2px;top:982.7px;width:45.799999999999955px;height:30px;border-radius:5px;background:#414141;box-shadow:0 0 0 1px #303030,inset 0 1px 0 #505050"></div>
<div class="a" style="left:1387.2px;top:982.7px;width:45.799999999999955px;height:30px;border-radius:5px;background:#414141;box-shadow:0 0 0 1px #303030,inset 0 1px 0 #505050"></div>
<div class="a" style="left:1437.5px;top:982.7px;width:46.5px;height:30px;border-radius:5px;background:#414141;box-shadow:0 0 0 1px #303030,inset 0 1px 0 #505050"></div>
<div class="a" style="left:1489px;top:982.7px;width:41px;height:30px;border-radius:5px;background:#414141;box-shadow:0 0 0 1px #303030,inset 0 1px 0 #505050"></div>
<div class="a" style="left:1336px;top:980px;width:46px;height:24px;text-align:center;font-family:'Liberation Serif',serif;font-size:24px;line-height:24px;color:#8c8c8c">go</div>
<svg class="a" style="left:1398px;top:986px" width="22" height="14" viewBox="0 0 22 14"><rect x="1.7" y="2" width="18.6" height="14" fill="none" stroke="#8c8c8c" stroke-width="1.3"/><text x="11" y="19" text-anchor="middle" font-family="Liberation Serif" font-size="15" fill="#8c8c8c">G</text></svg>
<div class="a" style="left:1438px;top:984px;width:46px;height:16px;overflow:hidden;text-align:center;font-family:'Liberation Serif',serif;font-style:italic;font-size:30px;line-height:30px;color:#8c8c8c">A</div>
</div></body></html>
